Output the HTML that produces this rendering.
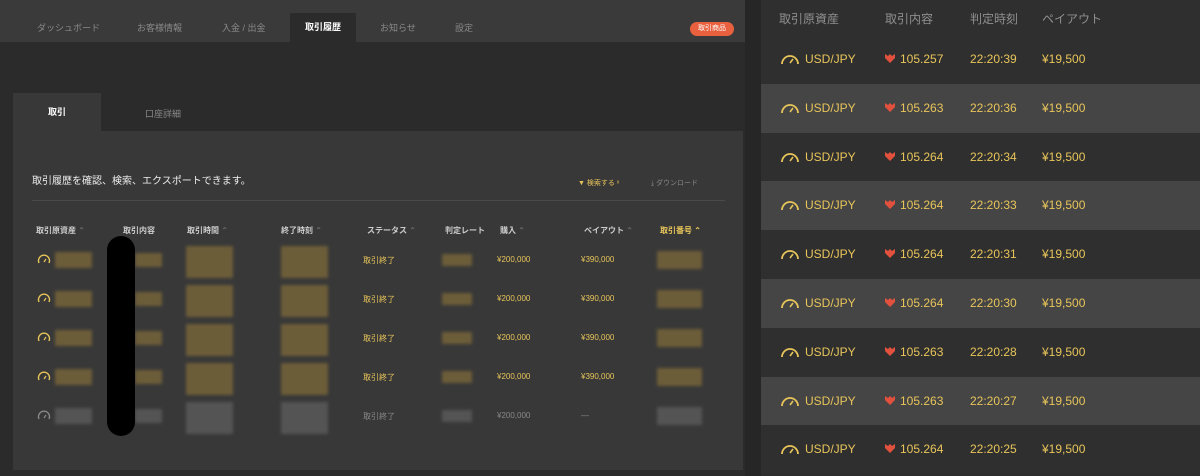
<!DOCTYPE html>
<html><head><meta charset="utf-8"><style>
*{margin:0;padding:0;box-sizing:border-box}
body{width:1200px;height:476px;background:#262626;font-family:"Liberation Sans","Noto Sans CJK JP",sans-serif;position:relative;overflow:hidden}
.abs{position:absolute}
#left{left:0;top:0;width:745px;height:476px;background:#2b2b2b}
#nav{left:0;top:0;width:745px;height:42px;background:#3a3a3a}
.nl{position:absolute;top:21px;font-size:9px;color:#8a8a8a}
#act{left:290px;top:13px;width:66px;height:29px;background:#2b2b2b;color:#fff;font-size:9px;font-weight:bold;text-align:center;line-height:29px}
#btn{left:690px;top:22px;width:44px;height:14px;border-radius:7px;background:#e8603e;color:#fff;font-size:7px;text-align:center;line-height:14px}
#ptab{left:13px;top:93px;width:88px;height:38px;background:#383838;color:#fff;font-size:9px;font-weight:bold;text-align:center;line-height:38px}
#panel{left:13px;top:131px;width:730px;height:339px;background:#383838}
.th{position:absolute;top:225px;font-size:8px;color:#ccc;font-weight:bold}
.y{color:#e8c55a}
.cell{position:absolute;font-size:8px;color:#e8c55a}
.blur{position:absolute;background:#76643a;opacity:.85;filter:blur(1.5px)}
.g{background:#5a5a5a}
#right{left:761px;top:0;width:439px;height:476px;background:#2d2d2d}
.rh{position:absolute;top:10px;font-size:12px;color:#8f8f8f}
.row{position:absolute;left:0;width:439px;height:48.8px}
.row span{position:absolute;top:17px;font-size:12px;color:#e8c55a}
</style></head><body>
<div id="left" class="abs"></div>
<div id="nav" class="abs">
<span class="nl" style="left:37px">ダッシュボード</span>
<span class="nl" style="left:137px">お客様情報</span>
<span class="nl" style="left:222px">入金 / 出金</span>
<span class="nl" style="left:380px">お知らせ</span>
<span class="nl" style="left:455px">設定</span>
</div>
<div id="act" class="abs">取引履歴</div>
<div id="btn" class="abs">取引商品</div>
<div id="ptab" class="abs">取引</div>
<div class="abs" style="left:145px;top:107px;font-size:9px;color:#888">口座詳細</div>
<div id="panel" class="abs"></div>
<div class="abs" style="left:32px;top:172px;font-size:10px;color:#eee">取引履歴を確認、検索、エクスポートできます。</div>
<div class="abs" style="left:578px;top:178px;font-size:7px;color:#e8c55a">▼ 検索する ˣ</div>
<div class="abs" style="left:651px;top:178px;font-size:7px;color:#888">⤓ ダウンロード</div>
<div class="abs" style="left:32px;top:200px;width:693px;height:1px;background:#4a4a4a"></div>
<span class="th" style="left:36px">取引原資産 <span style="color:#666">⌃</span></span>
<span class="th" style="left:123px">取引内容</span>
<span class="th" style="left:187px">取引時間 <span style="color:#666">⌃</span></span>
<span class="th" style="left:281px">終了時刻 <span style="color:#666">⌃</span></span>
<span class="th" style="left:367px">ステータス <span style="color:#666">⌃</span></span>
<span class="th" style="left:445px">判定レート</span>
<span class="th" style="left:500px">購入 <span style="color:#666">⌃</span></span>
<span class="th" style="left:584px">ペイアウト <span style="color:#666">⌃</span></span>
<span class="th y" style="left:660px">取引番号 <span>⌃</span></span>
<div id="rows"></div>
<div class="abs" style="left:107px;top:236px;width:28px;height:200px;border-radius:14px;background:#000"></div>
<div id="right" class="abs">
<div class="abs" style="left:0;top:0;width:439px;height:35px;background:#2f2f2f"></div>
<span class="rh" style="left:18px">取引原資産</span>
<span class="rh" style="left:124px">取引内容</span>
<span class="rh" style="left:209px">判定時刻</span>
<span class="rh" style="left:281px">ペイアウト</span>
</div>
<script>
var L=document.getElementById('rows'),h='';
var ys=[260,299,338,377,416];
ys.forEach(function(y,i){var last=i==4,c=last?' g':'',col=last?'#888':'#e8c55a';
h+='<svg class="abs" style="left:37px;top:'+(y-6)+'px" width="14" height="10" viewBox="0 0 14 10"><path d="M2 9 A5.5 5.5 0 1 1 12 9" fill="none" stroke="'+col+'" stroke-width="1.4"/><path d="M7 8 L9 5" stroke="'+col+'" stroke-width="1.2"/></svg>';
h+='<div class="blur'+c+'" style="left:55px;top:'+(y-8)+'px;width:37px;height:16px"></div>';
h+='<div class="blur'+c+'" style="left:135px;top:'+(y-7)+'px;width:27px;height:14px"></div>';
h+='<div class="blur'+c+'" style="left:186px;top:'+(y-14)+'px;width:47px;height:32px"></div>';
h+='<div class="blur'+c+'" style="left:281px;top:'+(y-14)+'px;width:47px;height:32px"></div>';
h+='<span class="cell" style="left:363px;top:'+(y-5)+'px;color:'+col+'">取引終了</span>';
h+='<div class="blur'+c+'" style="left:442px;top:'+(y-6)+'px;width:30px;height:12px"></div>';
h+='<span class="cell" style="left:497px;top:'+(y-5)+'px;color:'+col+'">¥200,000</span>';
h+='<span class="cell" style="left:581px;top:'+(y-5)+'px;color:'+col+'">'+(last?'—':'¥390,000')+'</span>';
h+='<div class="blur'+c+'" style="left:657px;top:'+(y-9)+'px;width:45px;height:18px"></div>';});
L.innerHTML=h;
var R=document.getElementById('right'),r='';
var d=[['105.257','22:20:39'],['105.263','22:20:36'],['105.264','22:20:34'],['105.264','22:20:33'],['105.264','22:20:31'],['105.264','22:20:30'],['105.263','22:20:28'],['105.263','22:20:27'],['105.264','22:20:25']];
d.forEach(function(v,i){var top=35+i*48.8;
r+='<div class="row" style="top:'+top+'px;background:'+(i%2?'#454545':'#2f2f2f')+'">'+
'<svg style="position:absolute;left:19px;top:17px" width="20" height="14" viewBox="0 0 20 14"><path d="M2 12 A8 8 0 1 1 18 12" fill="none" stroke="#e8c55a" stroke-width="1.8"/><path d="M10 11 L13 7" stroke="#e8c55a" stroke-width="1.6"/></svg>'+
'<span style="left:44px">USD/JPY</span>'+
'<svg style="position:absolute;left:124px;top:19px" width="10" height="9" viewBox="0 0 10 9"><path d="M0 0 L3 2 L5 0 L7 2 L10 0 L10 4 L5 9 L0 4Z" fill="#e2503e"/></svg>'+
'<span style="left:139px">'+v[0]+'</span><span style="left:209px">'+v[1]+'</span><span style="left:281px">¥19,500</span></div>';});
R.insertAdjacentHTML('beforeend',r);
</script>
</body></html>
